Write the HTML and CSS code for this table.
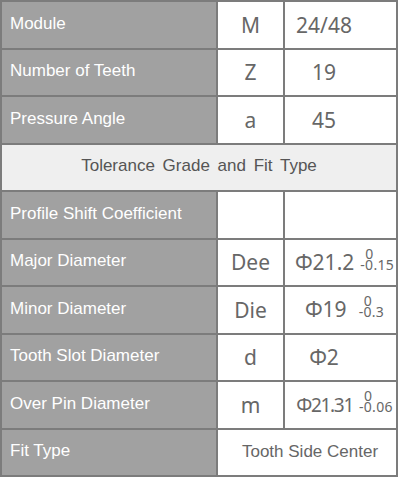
FILE: index.html
```html
<!DOCTYPE html>
<html>
<head>
<meta charset="utf-8">
<link rel="stylesheet" href="styles.css">
</head>
<body>
<div class="table">
  <div class="label">Module</div>
  <div class="sym">M</div>
  <div class="val plain">24/48</div>

  <div class="label">Number of Teeth</div>
  <div class="sym">Z</div>
  <div class="val plain">19</div>

  <div class="label">Pressure Angle</div>
  <div class="sym">a</div>
  <div class="val plain">45</div>

  <div class="section">Tolerance Grade and Fit Type</div>

  <div class="label">Profile Shift Coefficient</div>
  <div class="sym"></div>
  <div class="val"></div>

  <div class="label">Major Diameter</div>
  <div class="sym">Dee</div>
  <div class="val tol"><span class="main">Φ21.2</span><span class="stack"><span class="up">0</span><span class="low">-0.15</span></span></div>

  <div class="label">Minor Diameter</div>
  <div class="sym">Die</div>
  <div class="val tol"><span class="main">Φ19</span><span class="stack wide"><span class="up">0</span><span class="low">-0.3</span></span></div>

  <div class="label">Tooth Slot Diameter</div>
  <div class="sym">d</div>
  <div class="val plain">Φ2</div>

  <div class="label">Over Pin Diameter</div>
  <div class="sym">m</div>
  <div class="val tol"><span class="main narrow">Φ21.31</span><span class="stack"><span class="up">0</span><span class="low">-0.06</span></span></div>

  <div class="label">Fit Type</div>
  <div class="fit">Tooth Side Center</div>
</div>
</body>
</html>
```

FILE: styles.css
```css
html, body {
  margin: 0;
  padding: 0;
  background: #ffffff;
}

.table {
  width: 398px;
  box-sizing: border-box;
  display: grid;
  grid-template-columns: 214px 65px 111px;
  grid-auto-rows: 45.5px;
  gap: 2px;
  padding: 2px;
  background: #7c7c7c;
}

.label {
  background: #a1a1a1;
  color: #ffffff;
  font-family: "Liberation Sans", Arial, sans-serif;
  font-size: 17px;
  display: flex;
  align-items: center;
  padding: 0 0 2px 8px;
}

.sym, .val {
  background: #ffffff;
  color: #676767;
  font-family: "Noto Sans", "Open Sans", sans-serif;
  font-size: 21px;
  display: flex;
  align-items: center;
  justify-content: center;
  white-space: nowrap;
}

.val.plain {
  padding-right: 33px;
}

.val.tol {
  padding-left: 8px;
  display: block;
  text-align: center;
  line-height: 45px;
}

.main {
  vertical-align: baseline;
}

.main.narrow {
  font-size: 19px;
  letter-spacing: -1.3px;
}

.stack {
  display: inline-block;
  vertical-align: baseline;
  margin-left: 6px;
  font-size: 14px;
  line-height: 11px;
  letter-spacing: 0.3px;
  text-align: left;
}

.stack.wide {
  margin-left: 12px;
}

.stack .up, .stack .low {
  display: block;
}

.stack .up {
  padding-left: 5px;
}

.section {
  grid-column: 1 / -1;
  background: #efefef;
  color: #555555;
  font-family: "Liberation Sans", Arial, sans-serif;
  font-size: 17px;
  word-spacing: 3px;
  display: flex;
  align-items: center;
  justify-content: center;
  padding-bottom: 2px;
}

.fit {
  grid-column: 2 / 4;
  background: #ffffff;
  color: #666666;
  font-family: "Liberation Sans", Arial, sans-serif;
  font-size: 17px;
  display: flex;
  align-items: center;
  justify-content: center;
  padding-left: 6px;
}
```
